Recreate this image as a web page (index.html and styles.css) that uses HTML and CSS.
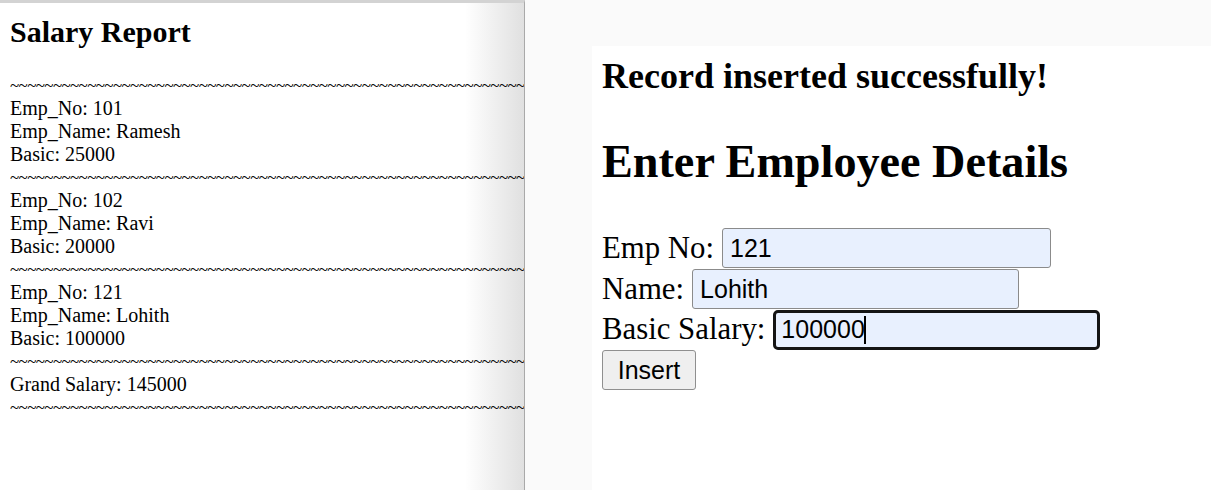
FILE: index.html
```html
<!DOCTYPE html>
<html lang="en">
<head>
<meta charset="utf-8">
<title>Salary Report / Employee Form</title>
<link rel="stylesheet" href="styles.css">
</head>
<body>
<div class="screen">
  <section class="report">
    <h2 class="report-title">Salary Report</h2>
    <div class="sep">~~~~~~~~~~~~~~~~~~~~~~~~~~~~~~~~~~~~~~~~~~~~~~~~~~~~~~~~~~~~</div>
    <div class="rec">Emp_No: 101<br>Emp_Name: Ramesh<br>Basic: 25000</div>
    <div class="sep">~~~~~~~~~~~~~~~~~~~~~~~~~~~~~~~~~~~~~~~~~~~~~~~~~~~~~~~~~~~~</div>
    <div class="rec">Emp_No: 102<br>Emp_Name: Ravi<br>Basic: 20000</div>
    <div class="sep">~~~~~~~~~~~~~~~~~~~~~~~~~~~~~~~~~~~~~~~~~~~~~~~~~~~~~~~~~~~~</div>
    <div class="rec">Emp_No: 121<br>Emp_Name: Lohith<br>Basic: 100000</div>
    <div class="sep">~~~~~~~~~~~~~~~~~~~~~~~~~~~~~~~~~~~~~~~~~~~~~~~~~~~~~~~~~~~~</div>
    <div class="rec">Grand Salary: 145000</div>
    <div class="sep">~~~~~~~~~~~~~~~~~~~~~~~~~~~~~~~~~~~~~~~~~~~~~~~~~~~~~~~~~~~~</div>
  </section>
  <section class="app">
    <div class="page">
      <h3 class="msg">Record inserted successfully!</h3>
      <h2 class="form-title">Enter Employee Details</h2>
      <form class="emp-form">
        <div class="row"><label class="lbl" for="eno">Emp No:</label><input class="field w-no" id="eno" type="text" value="121"></div>
        <div class="row"><label class="lbl" for="ename">Name:</label><input class="field w-name" id="ename" type="text" value="Lohith"></div>
        <div class="row"><label class="lbl" for="basic">Basic Salary:</label><span class="field-wrap"><input class="field w-basic focused" id="basic" type="text" value="100000"><span class="caret"></span></span></div>
        <div class="row"><button class="btn" type="button">Insert</button></div>
      </form>
    </div>
  </section>
</div>
</body>
</html>
```
FILE: styles.css
```css
* { box-sizing: border-box; }
html, body { margin: 0; padding: 0; }
body { background: #fafafa; }

.screen {
  display: flex;
  width: 1211px;
  height: 490px;
  overflow: hidden;
}

.report {
  width: 525px;
  flex: 0 0 525px;
  border-top: 3px solid #d3d3d3;
  border-right: 1px solid #a9a9a9;
  background: linear-gradient(to right, #ffffff 0, #ffffff 465px, #e0e0e0 100%);
  padding: 10px 0 0 10px;
  overflow: hidden;
  font-family: "Liberation Serif", "Times New Roman", serif;
  font-size: 20px;
  line-height: 23px;
  color: #000;
  white-space: nowrap;
}

.report-title {
  margin: 0 0 24px;
  font-size: 30px;
  line-height: 37px;
  font-weight: bold;
}

.sep {
  font-size: 17px;
  letter-spacing: -0.62px;
  overflow: hidden;
}

.app {
  flex: 1;
  background: #fafafa;
  padding: 46px 0 0 67px;
  display: flex;
}

.page {
  flex: 1;
  background: #ffffff;
  padding: 10px 0 0 10px;
  font-family: "Liberation Serif", "Times New Roman", serif;
  color: #000;
}

.msg {
  margin: 0;
  font-size: 36px;
  line-height: 41px;
  font-weight: bold;
}

.form-title {
  margin: 38px 0 40px;
  font-size: 46.2px;
  line-height: 53px;
  font-weight: bold;
}

.emp-form {
  display: flex;
  flex-direction: column;
  margin: 0;
}

.row {
  display: flex;
  align-items: center;
  gap: 8px;
  height: 40.7px;
}

.lbl {
  font-size: 30.8px;
  line-height: 35px;
}

.field {
  height: 40px;
  background: #e8f0fe;
  border: 1px solid #8b8b8b;
  border-radius: 3px;
  font-family: "Liberation Sans", Arial, sans-serif;
  font-size: 25px;
  color: #000;
  padding: 0 7px;
  margin: 0;
  outline: none;
}

.w-no { width: 329px; }
.w-name { width: 327px; }

.field-wrap {
  position: relative;
  display: inline-flex;
}

.w-basic { width: 327px; }

.focused {
  border: 3px solid #141414;
  border-radius: 5px;
  padding: 0 5px;
  caret-color: transparent;
}

.caret {
  position: absolute;
  left: 91px;
  top: 6px;
  width: 1.5px;
  height: 28px;
  background: #000;
}

.btn {
  width: 94px;
  height: 40px;
  background: #efefef;
  border: 1px solid #8f8f8f;
  border-radius: 3px;
  font-family: "Liberation Sans", Arial, sans-serif;
  font-size: 25px;
  color: #000;
  padding: 0;
}
```
